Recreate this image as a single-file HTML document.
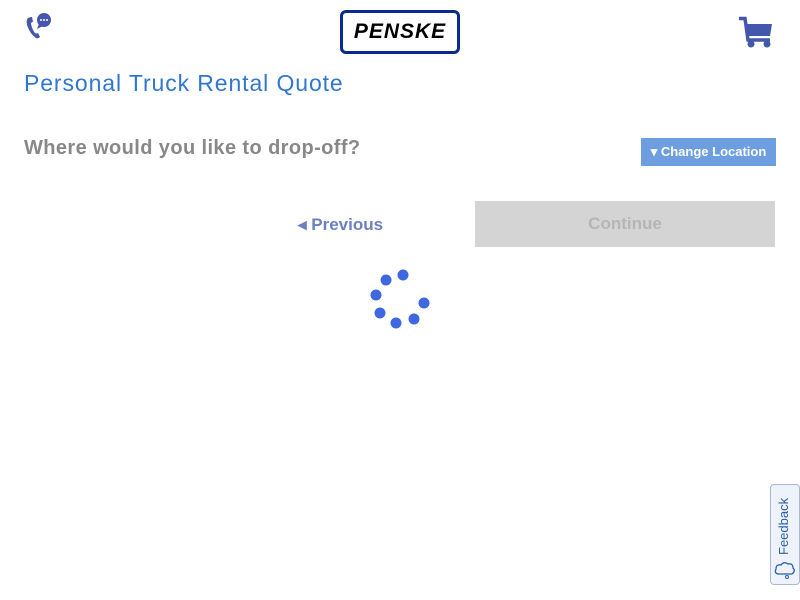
<!DOCTYPE html>
<html><head><style>
body{margin:0;width:800px;height:600px;background:#fff;font-family:"Liberation Sans",sans-serif;position:relative;overflow:hidden}
.a{position:absolute}
</style></head><body>
<svg class="a" style="left:24px;top:12px" width="32" height="28" viewBox="0 0 32 28">
<path d="M4 6 Q2 8 3 13 Q6 22 12 26 Q14 27 16 25 L14 21 Q12 22 11 21 Q8 17 7 12 Q7 10 9 10 L8 5 Q6 5 4 6Z" fill="#4358ad"/>
<circle cx="20" cy="8" r="7" fill="#4358ad"/><path d="M15 12 L13 17 L19 14Z" fill="#4358ad"/>
<circle cx="17" cy="8" r="1" fill="#fff"/><circle cx="20" cy="8" r="1" fill="#fff"/><circle cx="23" cy="8" r="1" fill="#fff"/>
</svg>
<div class="a" style="left:340px;top:10px;width:114px;height:38px;border:3px solid #0a2a8f;border-radius:6px;text-align:center;line-height:38px;font-weight:bold;font-style:italic;font-size:21px;letter-spacing:1px">PENSKE</div>
<svg class="a" style="left:738px;top:16px" width="36" height="32" viewBox="0 0 36 32">
<path d="M1 2.5 H7 L10 24 H32" stroke="#4358ad" stroke-width="3.5" fill="none"/>
<path d="M8 8 H34 L32 20 H10Z" fill="#4358ad"/>
<circle cx="13" cy="28" r="3.5" fill="#4358ad"/><circle cx="29" cy="28" r="3.5" fill="#4358ad"/>
</svg>
<div class="a" style="left:24px;top:70px;font-size:23px;color:#2f77d0;letter-spacing:0.9px">Personal Truck Rental Quote</div>
<div class="a" style="left:24px;top:137px;font-size:20px;font-weight:bold;color:#888;letter-spacing:0.4px">Where would you like to drop-off?</div>
<div class="a" style="left:641px;top:138px;width:135px;height:28px;background:#6d9fe0;color:#fff;font-size:13px;font-weight:bold;line-height:28px;text-align:center">▾ Change Location</div>
<div class="a" style="left:298px;top:215px;font-size:17px;color:#6c7fc0;font-weight:bold">◂ Previous</div>
<div class="a" style="left:475px;top:201px;width:300px;height:46px;background:#d4d4d4;color:#b5b5b5;font-size:17px;font-weight:bold;line-height:46px;text-align:center">Continue</div>
<svg class="a" style="left:365px;top:265px" width="70" height="70">
<g fill="#3f67e0"><circle cx="38" cy="10" r="5.5"/><circle cx="21" cy="15" r="5.5"/><circle cx="11" cy="30" r="5.5"/><circle cx="15" cy="48" r="5.5"/><circle cx="31" cy="58" r="5.5"/><circle cx="49" cy="54" r="5.5"/><circle cx="59" cy="38" r="5.5"/></g>
</svg>
<div class="a" style="left:770px;top:484px;width:28px;height:99px;border:1px solid #aab8d8;border-radius:4px;background:#eef2fa"></div>
<div class="a" style="left:776px;top:555px;font-size:13px;color:#2d5fb0;transform:rotate(-90deg);transform-origin:0 0">Feedback</div>
<svg class="a" style="left:773px;top:560px" width="24" height="20"><path d="M5 14 Q1 13 3 9 Q3 4 8 5 Q11 1 15 4 Q20 3 20 8 Q23 11 19 14Z" fill="none" stroke="#2d5fb0" stroke-width="1.3"/><circle cx="14" cy="17" r="1.5" fill="none" stroke="#2d5fb0"/></svg>
</body></html>
